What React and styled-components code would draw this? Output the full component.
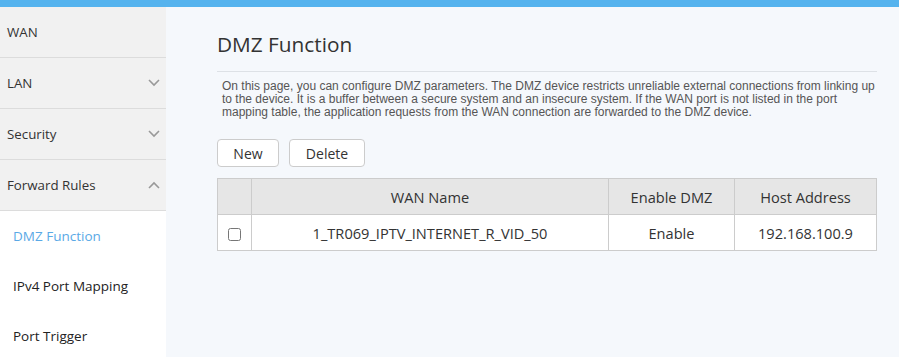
import styled, { createGlobalStyle } from "styled-components";

const GlobalStyle = createGlobalStyle`
  html, body { margin: 0; padding: 0; }
  body {
    font-family: "Open Sans", "Noto Sans", sans-serif;
    background: #f5f8fc;
    overflow: hidden;
  }
`;

const menu = [
  { label: "WAN" },
  { label: "LAN", arrow: "down" },
  { label: "Security", arrow: "down" },
  { label: "Forward Rules", arrow: "up" },
];

const subMenu = [
  { label: "DMZ Function", active: true },
  { label: "IPv4 Port Mapping" },
  { label: "Port Trigger" },
];

function Chevron({ dir }) {
  return (
    <svg width="12" height="8" viewBox="0 0 12 8">
      <path
        d={dir === "up" ? "M1 7 L6 2 L11 7" : "M1 1 L6 6 L11 1"}
        fill="none"
        stroke="#999"
        strokeWidth="1.6"
      />
    </svg>
  );
}

export default function App() {
  return (
    <>
      <GlobalStyle />
      <TopBar />
      <Layout>
        <Sidebar>
          {menu.map(m => (
            <MenuItem key={m.label}>
              <span>{m.label}</span>
              {m.arrow && <Chevron dir={m.arrow} />}
            </MenuItem>
          ))}
          <SubMenu>
            {subMenu.map(s => (
              <SubItem key={s.label} active={s.active}>{s.label}</SubItem>
            ))}
          </SubMenu>
        </Sidebar>
        <Main>
          <Title>DMZ Function</Title>
          <Desc>
            On this page, you can configure DMZ parameters. The DMZ device restricts unreliable external connections from linking up
            to the device. It is a buffer between a secure system and an insecure system. If the WAN port is not listed in the port
            mapping table, the application requests from the WAN connection are forwarded to the DMZ device.
          </Desc>
          <Toolbar>
            <Button>New</Button>
            <Button wide>Delete</Button>
          </Toolbar>
          <Table>
            <colgroup>
              <col style={{ width: 34 }} />
              <col style={{ width: 357 }} />
              <col style={{ width: 126 }} />
              <col />
            </colgroup>
            <thead>
              <tr>
                <Th />
                <Th>WAN Name</Th>
                <Th>Enable DMZ</Th>
                <Th>Host Address</Th>
              </tr>
            </thead>
            <tbody>
              <tr>
                <Td><Check type="checkbox" /></Td>
                <Td>1_TR069_IPTV_INTERNET_R_VID_50</Td>
                <Td>Enable</Td>
                <Td>192.168.100.9</Td>
              </tr>
            </tbody>
          </Table>
        </Main>
      </Layout>
    </>
  );
}

const TopBar = styled.div`
  height: 7px;
  background: #55b3ee;
`;

const Layout = styled.div`
  display: flex;
  height: 350px;
  overflow: hidden;
`;

const Sidebar = styled.nav`
  width: 166px;
  flex-shrink: 0;
  background: #f1f1f1;
  display: flex;
  flex-direction: column;
`;

const MenuItem = styled.div`
  flex-shrink: 0;
  height: 50px;
  border-bottom: 1px solid #dcdcdc;
  display: flex;
  align-items: center;
  justify-content: space-between;
  padding: 0 6px 0 7px;
  font-size: 13.3px;
  color: #333;
`;

const SubMenu = styled.div`
  flex: 1 0 auto;
  background: #fff;
`;

const SubItem = styled.div`
  height: 50px;
  display: flex;
  align-items: center;
  padding-left: 13px;
  font-size: 13.5px;
  color: ${p => (p.active ? "#5aa9e6" : "#222")};
`;

const Main = styled.main`
  flex: 1;
  padding: 0 22px 0 51px;
`;

const Title = styled.h1`
  margin: 0;
  padding: 23px 0 13px;
  font-size: 20.8px;
  font-weight: 400;
  color: #333;
  line-height: 28px;
  border-bottom: 1px solid #dde1e6;
`;

const Desc = styled.p`
  margin: 8px 0 0;
  padding-left: 5px;
  font-family: "Liberation Sans", Arial, sans-serif;
  font-size: 12px;
  line-height: 13px;
  color: #555;
`;

const Toolbar = styled.div`
  display: flex;
  gap: 10px;
  margin-top: 20px;
`;

const Button = styled.button`
  height: 28px;
  width: ${p => (p.wide ? "76px" : "62px")};
  background: #fff;
  border: 1px solid #ccc;
  border-radius: 4px;
  font-family: "Open Sans", "Noto Sans", sans-serif;
  font-size: 14px;
  color: #333;
  padding: 0;
`;

const Table = styled.table`
  margin-top: 11px;
  width: 660px;
  border-collapse: collapse;
  table-layout: fixed;
  font-size: 14.6px;
  color: #333;
`;

const Th = styled.th`
  height: 35px;
  background: #e6e6e6;
  border: 1px solid #ccc;
  font-weight: 400;
  text-align: center;
  padding: 0;
`;

const Td = styled.td`
  height: 35px;
  background: #fff;
  border: 1px solid #ccc;
  text-align: center;
  padding: 0;
`;

const Check = styled.input`
  width: 13px;
  height: 13px;
  margin: 0;
  vertical-align: middle;
`;
